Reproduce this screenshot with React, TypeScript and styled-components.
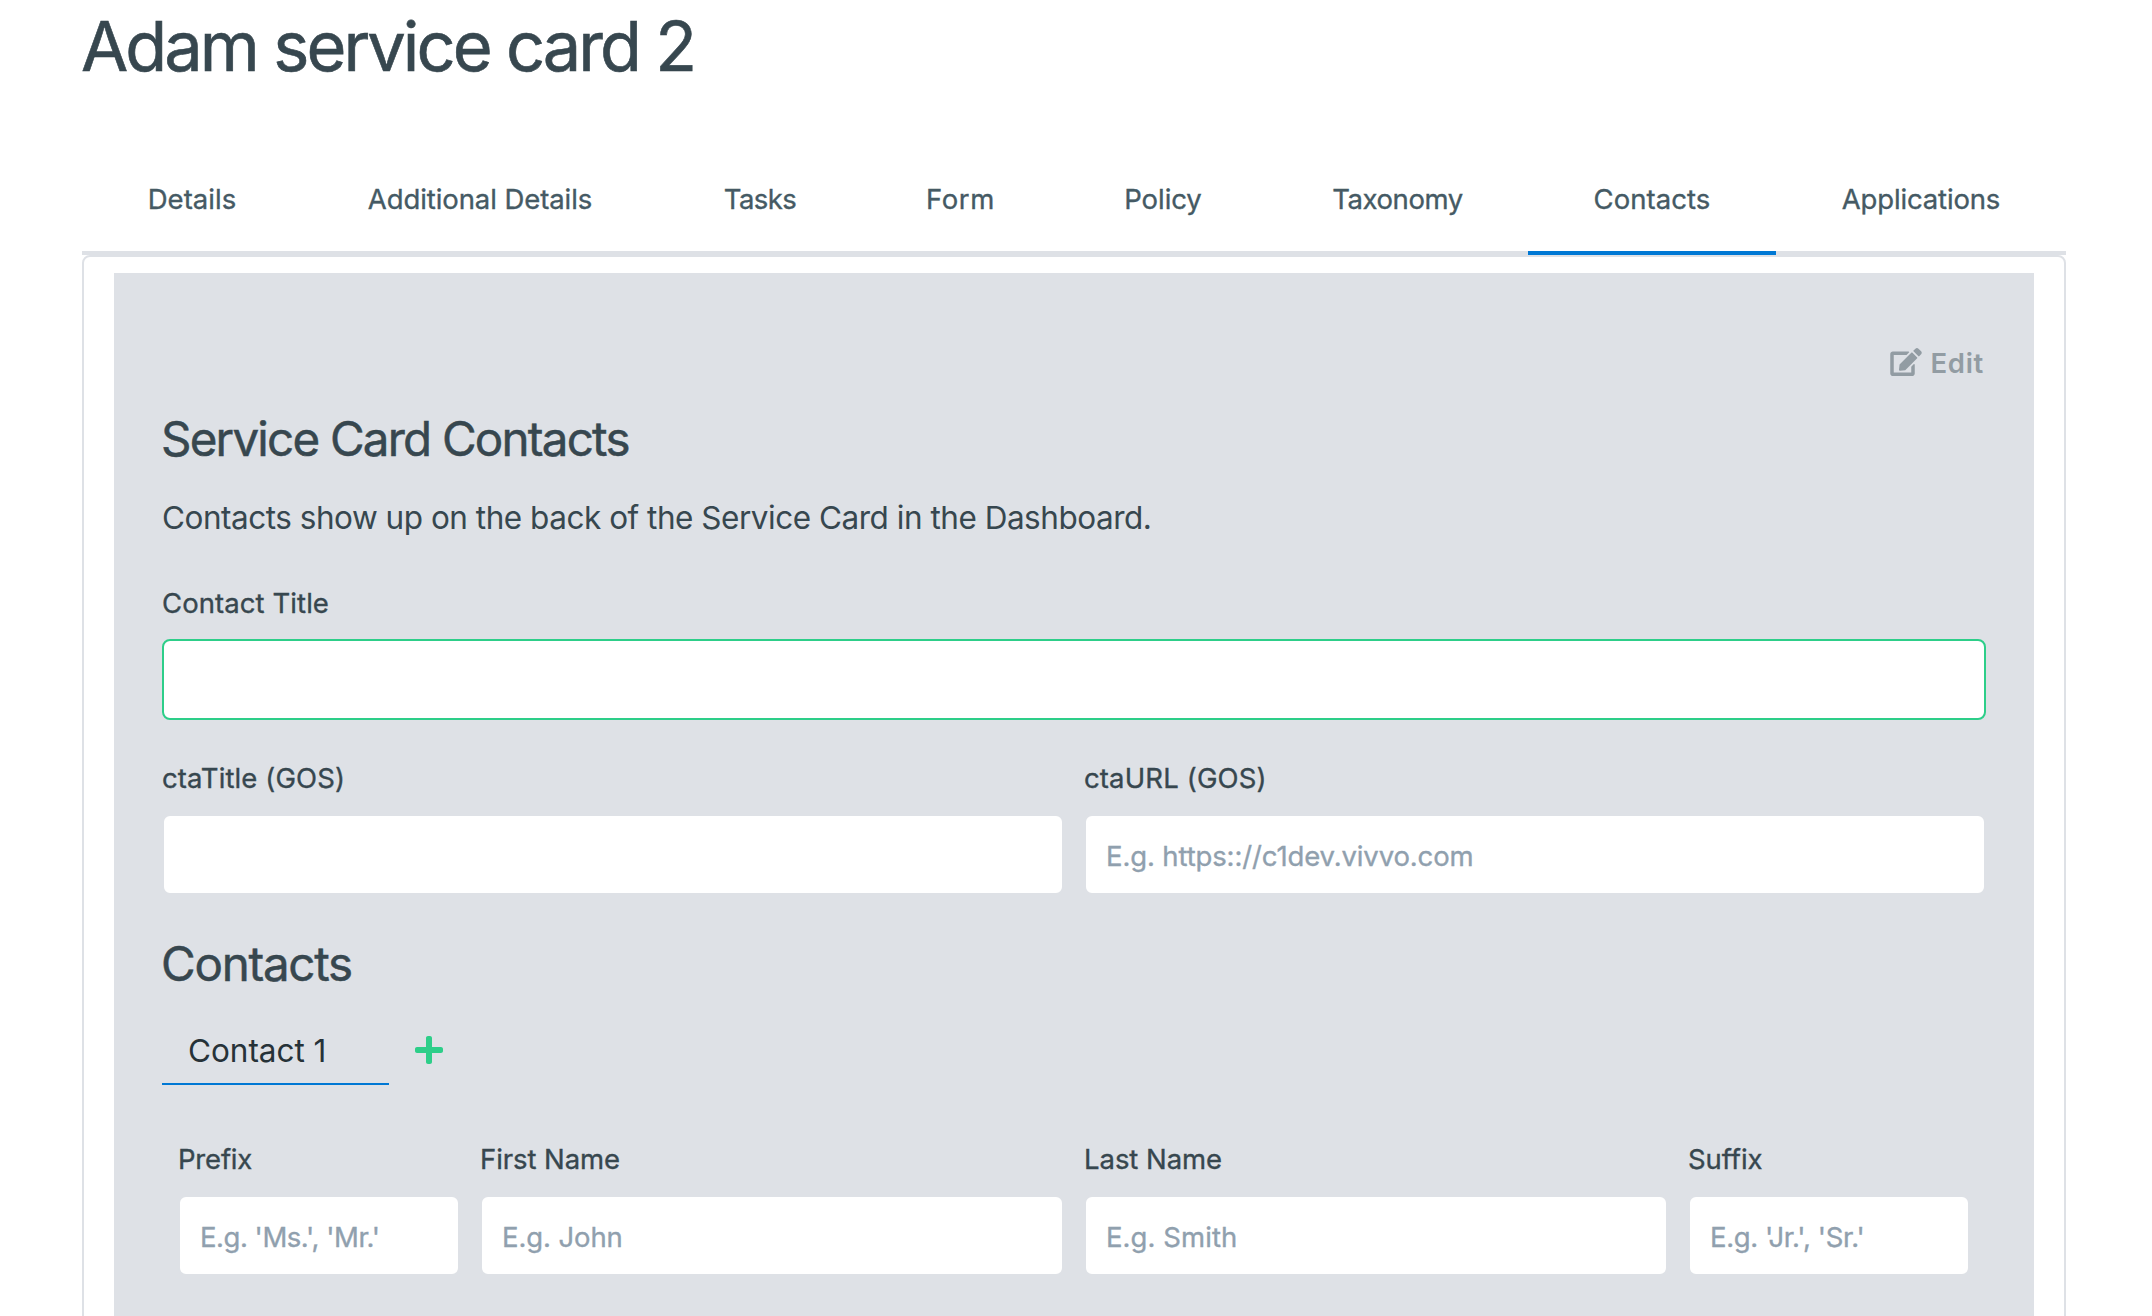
import React from 'react';
import styled, { createGlobalStyle } from 'styled-components';
import { FaEdit, FaPlus } from 'react-icons/fa';

const color = {
  heading: '#37474f',
  tab: '#455a64',
  surface: '#dee1e6',
  accent: '#0078d4',
  success: '#2dce89',
  placeholder: '#90a0ae',
  disabled: '#929ca3',
};

const GlobalStyle = createGlobalStyle`
  *, *::before, *::after { box-sizing: border-box; }
  body {
    margin: 0;
    background: #fff;
    color: ${color.heading};
    font-family: Inter, "Liberation Sans", sans-serif;
    font-size: 27.5px;
    font-weight: 400;
  }
`;

const Page = styled.main`
  display: flex;
  flex-direction: column;
  height: 1316px;
  padding: 0 86px 0 82px;
  overflow: hidden;
`;

const Title = styled.h1`
  margin: 0 0 53px -1px;
  padding-top: 1px;
  font-size: 68.5px;
  font-weight: 400;
  line-height: 92px;
  letter-spacing: -2.95px;
  -webkit-text-stroke: 0.6px currentColor;
`;

const Tabs = styled.nav`
  display: grid;
  grid-template-columns: 220fr 356fr 204fr 197fr 208fr 261fr 248fr 290fr;
  flex: none;
  height: 109px;
`;

const Tab = styled.a<{ $active?: boolean; $spacing?: number }>`
  display: flex;
  align-items: center;
  justify-content: center;
  border-bottom: 4px solid ${(p) => (p.$active ? color.accent : color.surface)};
  color: ${color.tab};
  letter-spacing: ${(p) => p.$spacing ?? 0}px;
  white-space: nowrap;
  -webkit-text-stroke: 0.35px currentColor;
`;

const Card = styled.section`
  display: flex;
  flex: 1;
  margin-bottom: -20px;
  padding: 16px 30px 0;
  border: 2px solid ${color.surface};
  border-radius: 8px;
`;

const Panel = styled.form`
  flex: 1;
  padding: 60px 48px 0;
  background: ${color.surface};
`;

const Toolbar = styled.div`
  display: flex;
  justify-content: flex-end;
  height: 60px;
  padding-right: 2px;
`;

const EditButton = styled.button`
  display: flex;
  align-items: center;
  gap: 8px;
  padding: 0;
  border: 0;
  background: none;
  color: ${color.disabled};
  font: inherit;
  font-weight: 600;
  letter-spacing: 0.7px;

  svg {
    width: 32px;
    height: 28px;
    margin-top: -2px;
  }
`;

const SectionTitle = styled.h2<{ $top: number; $spacing: number }>`
  margin: ${(p) => p.$top}px 0 0 -1px;
  font-size: 47.5px;
  font-weight: 400;
  line-height: 60px;
  letter-spacing: ${(p) => p.$spacing}px;
  -webkit-text-stroke: 0.5px currentColor;
`;

const Description = styled.p`
  margin: 25px 0 0;
  font-size: 31.5px;
  line-height: 48px;
  letter-spacing: -0.48px;
`;

const FieldRow = styled.div<{ $top: number; $columns?: string; $inset?: number }>`
  display: grid;
  grid-template-columns: ${(p) => p.$columns ?? '1fr'};
  gap: 20px;
  margin-top: ${(p) => p.$top}px;
  padding: 0 ${(p) => p.$inset ?? 0}px;
`;

const FieldBox = styled.label`
  display: flex;
  flex-direction: column;
  gap: 15px;
  min-width: 0;
  -webkit-text-stroke: 0.35px currentColor;
`;

const FieldLabel = styled.span<{ $spacing: number }>`
  line-height: 42px;
  letter-spacing: ${(p) => p.$spacing}px;
`;

const Input = styled.input<{ $valid?: boolean; $spacing?: number }>`
  width: 100%;
  height: 81px;
  padding: 2px 20px 0;
  border: 2px solid ${(p) => (p.$valid ? color.success : color.surface)};
  border-radius: 8px;
  outline: none;
  background: #fff;
  color: ${color.heading};
  font: inherit;
  letter-spacing: ${(p) => p.$spacing ?? 0}px;

  &::placeholder {
    color: ${color.placeholder};
    opacity: 1;
    -webkit-text-stroke: 0.35px ${color.placeholder};
  }
`;

const ContactTabs = styled.div`
  display: flex;
  align-items: center;
  gap: 26px;
  margin-top: 22px;
`;

const ContactTab = styled.a`
  display: flex;
  align-items: center;
  width: 227px;
  height: 69px;
  padding: 1px 0 0 26px;
  border-bottom: 2px solid ${color.accent};
  color: #263238;
  font-size: 31.5px;
  letter-spacing: -0.04px;
`;

const AddButton = styled.button`
  display: flex;
  padding: 0 0 2px;
  border: 0;
  background: none;
  color: ${color.success};
  font-size: 32px;

  svg {
    width: 28px;
    height: 32px;
  }
`;

interface FieldProps {
  label: string;
  labelSpacing?: number;
  placeholder?: string;
  spacing?: number;
  valid?: boolean;
}

const Field = ({ label, labelSpacing = 0, placeholder, spacing, valid }: FieldProps) => (
  <FieldBox>
    <FieldLabel $spacing={labelSpacing}>{label}</FieldLabel>
    <Input type="text" placeholder={placeholder} $spacing={spacing} $valid={valid} />
  </FieldBox>
);

const tabs = [
  { name: 'Details', spacing: 0.04 },
  { name: 'Additional Details', spacing: -0.08 },
  { name: 'Tasks', spacing: -0.55 },
  { name: 'Form', spacing: 0.6 },
  { name: 'Policy', spacing: -0.05 },
  { name: 'Taxonomy', spacing: -0.45 },
  { name: 'Contacts', spacing: 0.05, active: true },
  { name: 'Applications', spacing: -0.16 },
];

export default function App() {
  return (
    <>
      <GlobalStyle />
      <Page>
        <Title>Adam service card 2</Title>
        <Tabs>
          {tabs.map((t) => (
            <Tab key={t.name} $active={t.active} $spacing={t.spacing}>
              {t.name}
            </Tab>
          ))}
        </Tabs>
        <Card>
          <Panel>
            <Toolbar>
              <EditButton type="button">
                <FaEdit />
                Edit
              </EditButton>
            </Toolbar>
            <SectionTitle $top={16} $spacing={-1.78}>Service Card Contacts</SectionTitle>
            <Description>
              Contacts show up on the back of the Service Card in the Dashboard.
            </Description>
            <FieldRow $top={40}>
              <Field label="Contact Title" labelSpacing={0.08} valid />
            </FieldRow>
            <FieldRow $top={37} $columns="1fr 1fr">
              <Field label="ctaTitle (GOS)" labelSpacing={0.12} />
              <Field
                label="ctaURL (GOS)"
                labelSpacing={0.14}
                placeholder="E.g. https:://c1dev.vivvo.com"
                spacing={-0.13}
              />
            </FieldRow>
            <SectionTitle $top={39} $spacing={-1.27}>Contacts</SectionTitle>
            <ContactTabs>
              <ContactTab>Contact 1</ContactTab>
              <AddButton type="button" aria-label="Add contact">
                <FaPlus />
              </AddButton>
            </ContactTabs>
            <FieldRow $top={53} $columns="282px 1fr 1fr 282px" $inset={16}>
              <Field label="Prefix" labelSpacing={-0.2} placeholder="E.g. 'Ms.', 'Mr.'" spacing={-0.47} />
              <Field label="First Name" labelSpacing={-0.08} placeholder="E.g. John" spacing={-0.1} />
              <Field label="Last Name" labelSpacing={-0.05} placeholder="E.g. Smith" spacing={0.08} />
              <Field label="Suffix" labelSpacing={-0.05} placeholder="E.g. 'Jr.', 'Sr.'" spacing={-0.38} />
            </FieldRow>
          </Panel>
        </Card>
      </Page>
    </>
  );
}
